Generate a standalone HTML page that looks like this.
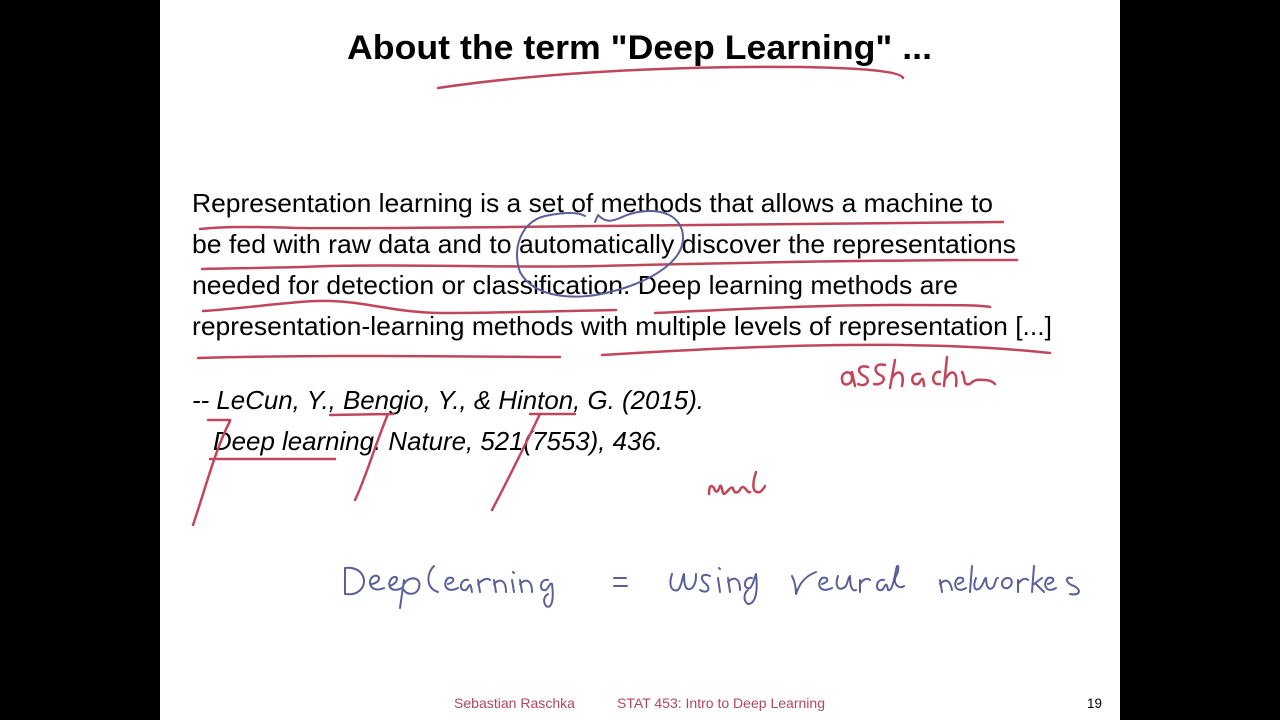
<!DOCTYPE html>
<html><head><meta charset="utf-8"><style>
html,body{margin:0;padding:0;background:#000;}
svg{display:block}
</style></head><body>
<svg width="1280" height="720" viewBox="0 0 1280 720" xmlns="http://www.w3.org/2000/svg">
<rect width="1280" height="720" fill="#000"/>
<rect x="160" y="0" width="960" height="720" fill="#fff"/>
<g font-family="Liberation Sans, sans-serif" fill="#000">
<text x="347" y="59" font-size="34" font-weight="bold" textLength="585" lengthAdjust="spacingAndGlyphs">About the term "Deep Learning" ...</text>
<g font-size="26">
<text x="192" y="212" textLength="801" lengthAdjust="spacingAndGlyphs">Representation learning is a set of methods that allows a machine to</text>
<text x="192" y="253" textLength="824" lengthAdjust="spacingAndGlyphs">be fed with raw data and to automatically discover the representations</text>
<text x="192" y="294" textLength="766" lengthAdjust="spacingAndGlyphs">needed for detection or classification. Deep learning methods are</text>
<text x="192" y="335" textLength="860" lengthAdjust="spacingAndGlyphs">representation-learning methods with multiple levels of representation [...]</text>
<text x="192" y="409" font-style="italic" textLength="512" lengthAdjust="spacingAndGlyphs">-- LeCun, Y., Bengio, Y., &amp; Hinton, G. (2015).</text>
<text x="213" y="450" font-style="italic" textLength="450" lengthAdjust="spacingAndGlyphs">Deep learning. Nature, 521(7553), 436.</text>
</g>
<g font-size="14" fill="#b2475a">
<text x="454" y="708" textLength="121" lengthAdjust="spacingAndGlyphs">Sebastian Raschka</text>
<text x="617" y="708" textLength="208" lengthAdjust="spacingAndGlyphs">STAT 453: Intro to Deep Learning</text>
</g>
<text x="1087" y="708" font-size="14" fill="#000" textLength="15" lengthAdjust="spacingAndGlyphs">19</text>
</g>
<g fill="none" stroke="#c0475a" stroke-width="2.5" stroke-linecap="round" stroke-linejoin="round">
<path d="M438 88 C560 70 700 66 800 67 C860 68 900 71 903 78"/>
<path d="M200 229 C230 226 260 227 300 228 C420 229 560 226 700 225 C820 224 920 222 1003 222"/>
<path d="M202 269 C240 268 280 268 330 266 C420 264 500 268 600 266 C760 262 880 260 1017 260"/>
<path d="M203 311 C250 308 300 300 330 301 C370 302 390 312 440 313 C500 313 560 311 616 310"/>
<path d="M655 313 C740 309 820 305 900 305 C960 305 980 305 990 307"/>
<path d="M198 358 C300 355 400 356 545 357 L560 357"/>
<path d="M602 355 C700 349 800 344 900 345 C980 346 1020 350 1050 353"/>
<path d="M210 459 L335 459"/>
<path d="M208 420 L230 420"/>
<path d="M230 421 C215 450 205 490 193 525"/>
<path d="M330 415 L393 414 M388 414 C375 445 365 480 355 500"/>
<path d="M530 414 L575 414 M540 414 C525 445 508 480 492 510"/>
<path d="M843 383 C838 372 852 368 852 378 C852 384 846 386 843 383 M852 372 L855 386 M868 367 C858 364 856 372 864 376 C872 380 866 388 858 384 M885 365 C874 362 873 372 880 375 C888 378 882 386 874 384 M895 360 L890 388 M892 378 C898 368 905 372 902 386 M920 374 C910 372 910 386 918 384 C922 380 923 374 924 386 M940 372 C932 370 930 386 940 384 M947 357 L944 386 M946 378 C952 368 958 372 956 386 M962 372 C966 378 962 386 970 384 C976 378 980 380 985 380 C990 380 993 382 995 384"/>
<path d="M709 494 C709 486 711 484 714 488 C716 494 718 492 720 486 C722 484 722 494 724 494 C728 492 730 486 733 488 C734 494 738 494 741 488 C745 484 747 494 750 492 M756 472 C752 484 752 494 760 492 C763 490 765 486 765 486"/>
</g>
<g fill="none" stroke="#5a5f9a" stroke-width="2" stroke-linecap="round" stroke-linejoin="round">
<path d="M585 216 C578 212 565 212 545 216 C520 222 512 250 520 272 C535 300 580 300 610 292 C650 282 690 260 682 230 C674 206 640 208 620 218 C610 222 605 222 598 215 L595 222"/>
<path d="M345 568 L345 594 M345 568 C360 566 368 578 362 588 C356 596 348 594 345 594 M372 584 C382 582 380 574 374 576 C366 580 370 594 384 588 M390 586 C400 582 398 574 392 578 C386 584 390 594 402 588 M404 580 L400 608 M404 584 C410 574 424 578 418 590 C414 596 406 594 404 590"/>
<path d="M434 566 C426 574 426 588 438 592 M448 584 C456 582 454 576 448 578 C442 584 446 594 458 588 M468 580 C460 578 458 592 466 590 C470 586 470 580 472 592 M478 580 L480 592 M478 584 C484 578 488 578 490 580 M494 580 L496 592 M494 584 C500 578 506 580 506 592 M512 580 L514 592 M513 572 L514 573 M520 580 L522 592 M520 584 C526 578 532 580 532 592 M548 580 C540 578 538 592 546 590 C550 586 550 582 552 584 C554 598 552 610 546 606 C542 600 545 596 548 594"/>
<path d="M614 578 L626 578 M614 586 L627 586"/>
<path d="M672 574 C668 586 672 592 678 590 C682 586 682 578 684 574 C684 586 686 592 692 588 C696 584 696 578 696 574 M710 576 C700 572 700 580 706 584 C712 590 706 594 700 590 M718 578 L720 592 M719 568 L720 569 M728 578 L730 592 M728 582 C734 576 740 578 740 590 M752 578 C744 576 742 590 750 588 C754 584 754 578 756 574 C758 590 756 604 748 604 C742 600 745 592 748 590"/>
<path d="M792 576 C796 584 796 592 796 594 C800 582 806 576 816 572 M822 584 C830 582 828 576 822 578 C816 584 820 594 832 588 M838 576 C834 588 840 592 846 586 C848 582 848 578 850 576 C850 586 852 592 856 590 M860 580 L860 592 M860 584 C864 578 868 578 870 580 M884 580 C876 578 874 592 882 590 C886 586 886 580 888 590 C892 592 894 580 896 570 C898 560 900 570 896 576 C892 584 900 590 904 586"/>
<path d="M940 580 L942 592 M940 584 C946 578 950 580 952 590 M958 584 C966 582 964 576 958 578 C952 584 956 594 966 588 M972 566 L970 592 M976 578 C972 588 976 592 980 588 C984 584 984 578 986 578 C986 588 990 592 994 586 C996 580 996 578 998 578 M1008 578 C1000 578 1000 590 1008 588 C1014 584 1012 578 1008 578 M1018 580 L1018 592 M1018 584 C1022 578 1026 578 1028 580 M1034 566 L1032 592 M1034 584 L1042 578 M1036 584 L1044 592 M1048 584 C1056 582 1054 576 1048 578 C1042 584 1046 594 1056 588 M1072 578 C1064 576 1066 584 1074 586 C1082 590 1080 596 1070 594"/>
</g>
</svg>
</body></html>
